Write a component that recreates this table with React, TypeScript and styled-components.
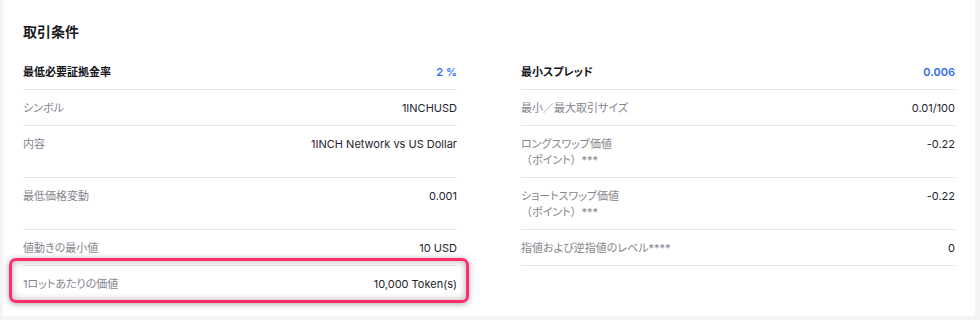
import React from "react";
import styled, { createGlobalStyle } from "styled-components";

const GlobalStyle = createGlobalStyle`
  html, body {
    margin: 0;
    padding: 0;
    background: #f3f4f6;
  }
  body {
    font-family: "Inter", "Noto Sans CJK JP", sans-serif;
    -webkit-font-smoothing: antialiased;
  }
`;

const Card = styled.section`
  box-sizing: border-box;
  width: 972px;
  margin-left: 3px;
  background: #ffffff;
  padding: 20px 20px 14px;
`;

const Title = styled.h2`
  margin: 0 0 12px;
  font-size: 14px;
  line-height: 22px;
  font-weight: 700;
  color: #1b1b1f;
  font-family: "Noto Sans CJK JP", sans-serif;
`;

const Grid = styled.div`
  display: grid;
  grid-template-columns: 1fr 1fr;
  column-gap: 64px;
`;

const Row = styled.div`
  position: relative;
  display: flex;
  justify-content: space-between;
  align-items: flex-start;
  padding: 10px 0 9px;
  border-bottom: 1px solid #e5e5e7;
  font-size: 11px;
  line-height: 16px;
`;

const Label = styled.div<{ $strong?: boolean }>`
  font-family: "Inter", "Noto Sans CJK JP", sans-serif;
  font-feature-settings: "palt";
  color: ${(p) => (p.$strong ? "#15151a" : "#85858c")};
  font-weight: ${(p) => (p.$strong ? 700 : 400)};
`;

const Paren = styled.span`
  font-feature-settings: normal;
`;

const Value = styled.div<{ $accent?: boolean }>`
  text-align: right;
  white-space: nowrap;
  color: ${(p) => (p.$accent ? "#2f6cf0" : "#24242e")};
  font-weight: ${(p) => (p.$accent ? 600 : 400)};
`;

const Highlight = styled.div`
  position: absolute;
  top: -8px;
  left: -14px;
  right: -12px;
  bottom: -2px;
  border: 3px solid #ff2c6c;
  border-radius: 7px;
  box-shadow: 0 1px 6px rgba(0, 0, 0, 0.35), inset 0 0 7px rgba(0, 0, 0, 0.32);
  pointer-events: none;
`;

type Item = {
  label: React.ReactNode;
  value: string;
  strong?: boolean;
  highlight?: boolean;
};

const PointNote = () => (
  <>
    <Paren>（</Paren>ポイント<Paren>）</Paren>***
  </>
);

const items: Item[] = [
  { label: "最低必要証拠金率", value: "2 %", strong: true },
  { label: "最小スプレッド", value: "0.006", strong: true },
  { label: "シンボル", value: "1INCHUSD" },
  { label: "最小／最大取引サイズ", value: "0.01/100" },
  { label: "内容", value: "1INCH Network vs US Dollar" },
  {
    label: (
      <>
        ロングスワップ価値
        <br />
        <PointNote />
      </>
    ),
    value: "-0.22",
  },
  { label: "最低価格変動", value: "0.001" },
  {
    label: (
      <>
        ショートスワップ価値
        <br />
        <PointNote />
      </>
    ),
    value: "-0.22",
  },
  { label: "値動きの最小値", value: "10 USD" },
  { label: "指値および逆指値のレベル****", value: "0" },
  { label: "1ロットあたりの価値", value: "10,000 Token(s)", highlight: true },
];

export default function App() {
  return (
    <>
      <GlobalStyle />
      <Card>
        <Title>取引条件</Title>
        <Grid>
          {items.map((it, i) => (
            <Row key={i}>
              <Label $strong={it.strong}>{it.label}</Label>
              <Value $accent={it.strong}>{it.value}</Value>
              {it.highlight && <Highlight />}
            </Row>
          ))}
        </Grid>
      </Card>
    </>
  );
}
